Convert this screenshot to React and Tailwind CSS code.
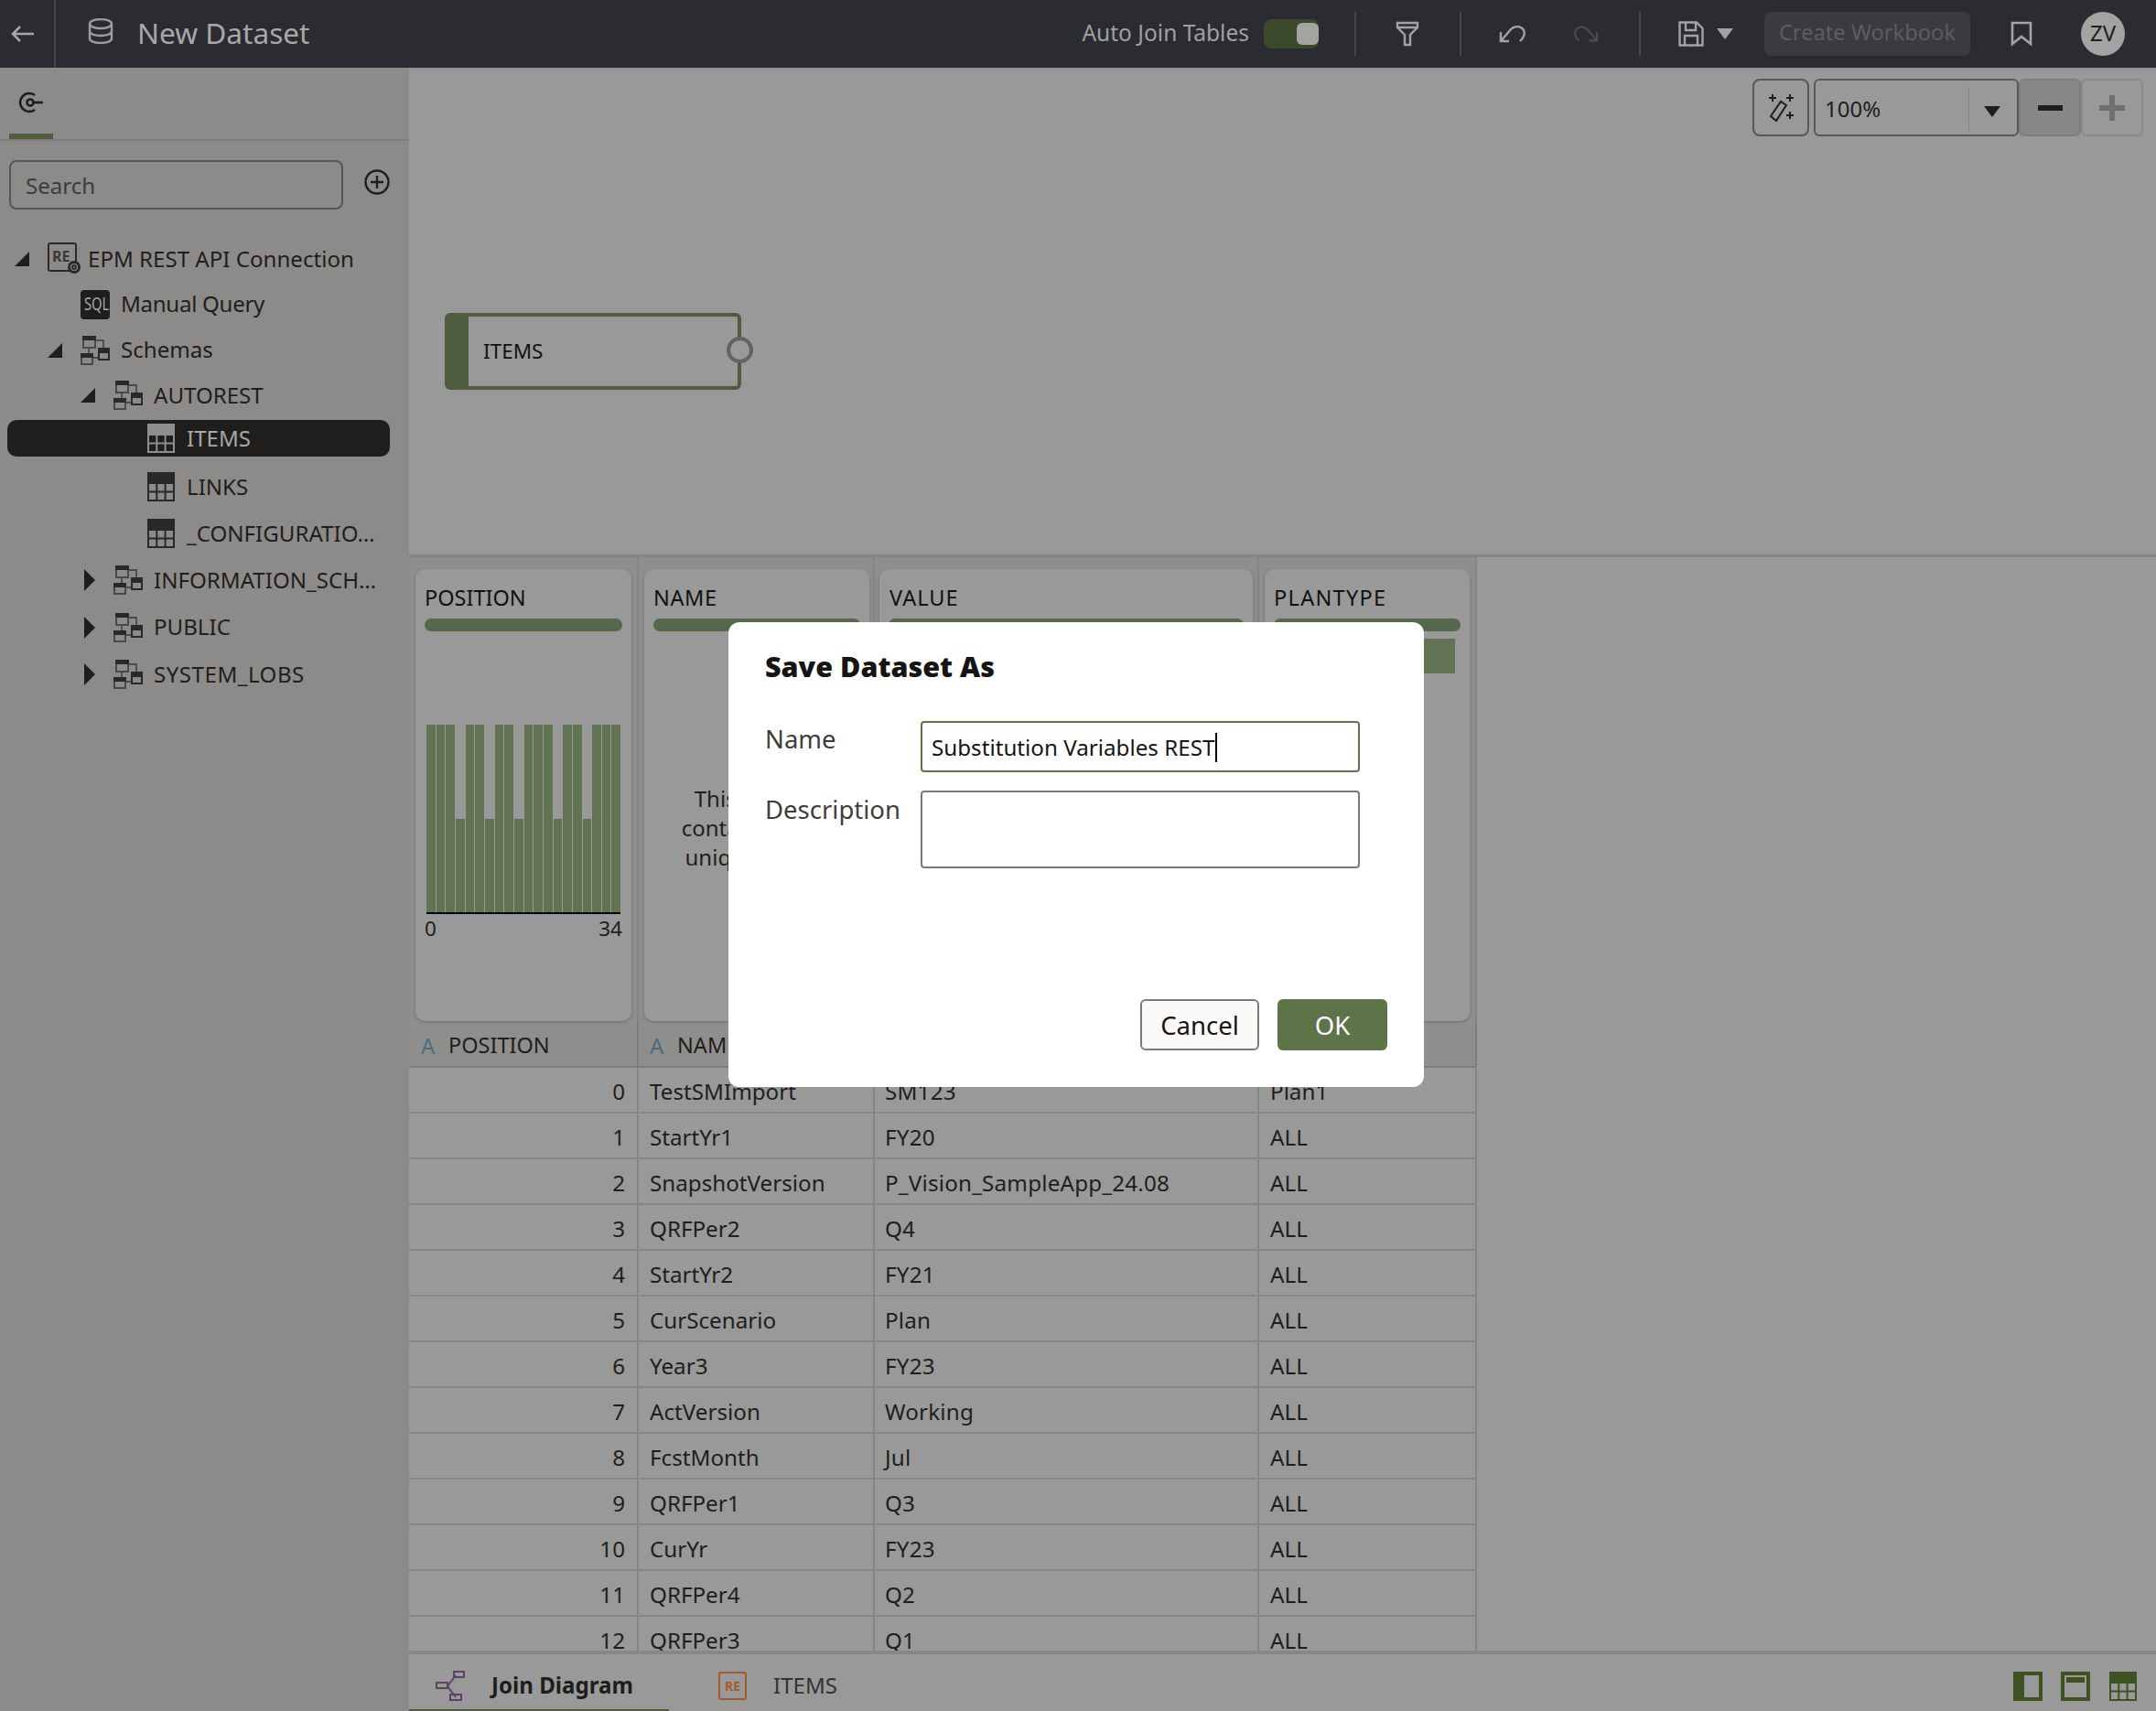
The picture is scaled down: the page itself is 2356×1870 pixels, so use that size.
import React from "react";

const rows = [
  ["0","TestSMImport","SM123","Plan1"],["1","StartYr1","FY20","ALL"],["2","SnapshotVersion","P_Vision_SampleApp_24.08","ALL"],
  ["3","QRFPer2","Q4","ALL"],["4","StartYr2","FY21","ALL"],["5","CurScenario","Plan","ALL"],["6","Year3","FY23","ALL"],
  ["7","ActVersion","Working","ALL"],["8","FcstMonth","Jul","ALL"],["9","QRFPer1","Q3","ALL"],["10","CurYr","FY23","ALL"],
  ["11","QRFPer4","Q2","ALL"],["12","QRFPer3","Q1","ALL"],
];
const bars = [1,1,1,0,1,1,0,1,1,0,1,1,1,0,1,1,0,1,1,1];
const indent = ["pl-[16px]","pl-[52px]","pl-[88px]","pl-[124px]"];
const cols = "grid grid-cols-[251px_258px_420px_238px] w-[1167px]";

const SchemaIcon = () => (
  <svg width="32" height="32" viewBox="0 0 32 32" fill="none" stroke="#2a2927" strokeWidth="2">
    <path d="M16 5H25V13M9 13V19M13 24H20" strokeWidth="1.4" stroke="#3a3937" />
    <rect x="3" y="1" width="13" height="12" stroke="#4a4947" /><rect x="2" y="0" width="15" height="5" fill="#2a2927" stroke="none" />
    <rect x="20" y="14" width="11" height="12" /><rect x="19" y="13" width="13" height="6" fill="#2a2927" stroke="none" />
    <rect x="1" y="20" width="12" height="11" stroke="#4a4947" /><rect x="0" y="19" width="14" height="5" fill="#2a2927" stroke="none" />
  </svg>
);
const TableIcon = ({ c = "#2a2927" }) => (
  <svg width="30" height="32" viewBox="0 0 30 32" className="ml-px" fill="none" stroke={c} strokeWidth="2">
    <rect x="1" y="1" width="28" height="30" />
    <rect x="0" y="0" width="30" height="13" fill={c} stroke="none" />
    <path d="M1 21.5H29M10.3 12V31M19.6 12V31" />
  </svg>
);
const ReConnIcon = () => (
  <svg width="37" height="36" viewBox="0 0 37 36" className="overflow-visible" fill="none">
    <rect x="1" y="1" width="30" height="30" rx="2" stroke="#2a2927" strokeWidth="2" />
    <text x="5" y="21" fontSize="16" fontWeight="700" fill="#3a3937" fontFamily="'Noto Sans',sans-serif">RE</text>
    <circle cx="29" cy="27" r="7" fill="#2a2927" />
    <circle cx="29" cy="27" r="3.5" stroke="#8c8b89" strokeWidth="1.2" />
    <circle cx="29" cy="27" r="1" fill="#8c8b89" />
  </svg>
);
const SqlIcon = () => (
  <div className="w-[32px] h-[32px] rounded-[4px] bg-[#1f1e1c] text-[#a8a8a6] text-[19px] leading-[31px] text-center overflow-hidden">
    <span className="inline-block scale-x-[0.78]">SQL</span>
  </div>
);
const Caret = ({ dir }) => (
  <div className="w-[16px] shrink-0 flex items-center justify-end">
    {dir === "down" && <svg width="16" height="16" viewBox="0 0 16 16"><polygon points="16,0 16,16 0,16" fill="#1f1e1c" /></svg>}
    {dir === "right" && <svg width="12" height="24" viewBox="0 0 12 24"><polygon points="0,0 12,12 0,24" fill="#1f1e1c" /></svg>}
  </div>
);

const TreeRow = ({ depth, caret, icon, label, h = "h-[51.3px]", selected, className = "", labelClass = "" }) => (
  <div className={`flex items-center ${h} ${className} ${selected ? "bg-[#1f1e1c] text-[#a8a8a6] rounded-[10px] ml-[8px] mr-[21px] pl-[116px]" : `text-[#1f1e1c] ${indent[depth]}`}`}>
    <Caret dir={caret} />
    <div className="ml-[20px] w-[32px] shrink-0 flex items-center">{icon}</div>
    <span className={`ml-[12px] whitespace-nowrap ${labelClass}`}>{label}</span>
  </div>
);

const Card = ({ title, track = "", children }) => (
  <div className="h-[494px] rounded-[10px] bg-[#999999] shadow-[0_1px_3px_rgba(0,0,0,0.25)] px-[10px] overflow-hidden">
    <div className={`mt-[19px] h-[24px] leading-[24px] text-[#111] text-[23.5px] ${track}`}>{title}</div>
    <div className="mt-[11px] h-[14px] rounded-full bg-[#55684a]" />
    {children}
  </div>
);

const Sep = ({ className }) => <div className={`w-[2px] h-[48px] bg-[#45464a] ${className}`} />;

const HeadCell = ({ label, className }) => (
  <div className={`h-[51px] pt-[5px] border-r-[2px] border-b-[2px] border-[#7d7d7c] flex items-center text-[#1f1e1c] ${className}`}>
    <span className="text-[#4b6b80] w-[30px] text-[24px]">A</span>
    <span className="text-[23.5px]">{label}</span>
  </div>
);

export default function App() {
  return (
    <div className="relative w-[2356px] h-[1870px] overflow-hidden flex flex-col bg-[#999999] text-[24.1px] font-['Noto_Sans',sans-serif]">
      {/* Header */}
      <header className="h-[74px] shrink-0 bg-[#2a2c31] flex items-center text-[#a0a0a0]">
        <div className="w-[61px] h-full border-r-[2px] border-[#45464a] flex items-center pl-[12px]">
          <svg width="26" height="20" viewBox="0 0 26 20" fill="none" stroke="#a8a8a8" strokeWidth="2.5"><path d="M25 10H2M10 2L2 10L10 18" /></svg>
        </div>
        <svg width="28" height="28" viewBox="0 0 28 28" className="ml-[35px] mb-[6px]" fill="none" stroke="#9c9c9c" strokeWidth="2.4">
          <ellipse cx="14" cy="6" rx="12" ry="5" /><path d="M2 6V22C2 25 7 27 14 27S26 25 26 22V6M2 14C2 17 7 19 14 19S26 17 26 14" />
        </svg>
        <span className="ml-[26px] pb-[2px] text-[31.6px] text-[#a8a8a8]">New Dataset</span>
        <div className="ml-auto flex items-center h-full">
          <span className="text-[24.5px] pb-[2px]">Auto Join Tables</span>
          <div className="ml-[16px] w-[60px] h-[32px] rounded-[8px] bg-[#3b4a2a] flex items-center justify-end">
            <div className="w-[24px] h-[24px] rounded-[6px] bg-[#a3a3a0]" />
          </div>
          <Sep className="ml-[39px]" />
          <svg width="26" height="28" viewBox="0 0 26 28" className="ml-[43px]" fill="none" stroke="#a3a3a3" strokeWidth="2.4"><path d="M2 2H24V7L16 15V26H10V15L2 7ZM2 7H24" /></svg>
          <Sep className="ml-[44px]" />
          <svg width="30" height="20" viewBox="0 0 30 20" className="ml-[41px]" fill="none" stroke="#a3a3a3" strokeWidth="2.4"><path d="M2 8V18H11M2 18L13 5C17 1 24 1 27 6C29 10 27 14 23 18" /></svg>
          <svg width="28" height="20" viewBox="0 0 30 20" className="ml-[51px]" fill="none" stroke="#4a4b4f" strokeWidth="2.4"><path d="M28 8V18H19M28 18L17 5C13 1 6 1 3 6C1 10 3 14 7 18" /></svg>
          <Sep className="ml-[44px]" />
          <svg width="28" height="28" viewBox="0 0 28 28" className="ml-[41px]" fill="none" stroke="#a3a3a3" strokeWidth="2.4"><path d="M1.5 1.5H20L26.5 8V26.5H1.5ZM8 2V10H19V2M7 26V16H21V26" /></svg>
          <svg width="18" height="12" viewBox="0 0 18 12" className="ml-[14px]"><polygon points="0,0 18,0 9,12" fill="#a3a3a3" /></svg>
          <div className="ml-[34px] w-[225px] h-[48px] pb-[2px] rounded-[8px] bg-[#3a3b3f] text-[#5c5d60] flex items-center justify-center text-[23.7px]">Create Workbook</div>
          <svg width="24" height="28" viewBox="0 0 24 28" className="ml-[44px]" fill="none" stroke="#a3a3a3" strokeWidth="2.6"><path d="M2 2H22V25L12 17L2 25Z" /></svg>
          <div className="ml-[53px] mr-[34px] w-[48px] h-[48px] pb-[2px] rounded-full bg-[#a3a3a3] text-[#1f1e1c] flex items-center justify-center text-[24px]">ZV</div>
        </div>
      </header>

      <div className="flex-1 flex min-h-0">
        {/* Sidebar */}
        <aside className="w-[447px] shrink-0 bg-[#8c8b89] flex flex-col">
          <div className="h-[80px] shrink-0 border-b-[2px] border-[#7f7e7c] flex flex-col">
            <svg width="28" height="24" viewBox="0 0 28 24" className="ml-[20px] mt-[26px]" fill="none" stroke="#1f1e1c" strokeWidth="2.6">
              <path d="M18 4A10 10 0 1 0 18 20" /><circle cx="13" cy="12" r="3.5" /><path d="M15 12H27" />
            </svg>
            <div className="mt-auto ml-[10px] w-[48px] h-[6px] bg-[#4f5d3e]" />
          </div>
          <div className="mt-[21px] flex items-center pl-[10px]">
            <div className="w-[365px] h-[54px] border-[2px] border-[#565653] rounded-[8px] pl-[16px] pt-[2px] flex items-center text-[#3c3c3a]">Search</div>
            <svg width="28" height="28" viewBox="0 0 28 28" className="ml-[23px] mb-[6px]" fill="none" stroke="#1f1e1c" strokeWidth="2.4"><circle cx="14" cy="14" r="12.5" /><path d="M14 7V21M7 14H21" /></svg>
          </div>
          <div className="mt-[29px]">
            <TreeRow depth={0} caret="down" h="h-[50px]" icon={<ReConnIcon />} label="EPM REST API Connection" />
            <TreeRow depth={1} h="h-[49px]" icon={<SqlIcon />} label="Manual Query" labelClass="tracking-[-0.3px]" />
            <TreeRow depth={1} caret="down" h="h-[51px]" icon={<SchemaIcon />} label="Schemas" />
            <TreeRow depth={2} caret="down" h="h-[48px]" icon={<SchemaIcon />} label="AUTOREST" />
            <TreeRow selected caret="" h="h-[40px]" className="mt-[3px] mb-[7px]" icon={<TableIcon c="#8f8f8d" />} label="ITEMS" />
            <TreeRow depth={3} icon={<TableIcon />} label="LINKS" />
            <TreeRow depth={3} icon={<TableIcon />} label="_CONFIGURATIO…" />
            <TreeRow depth={2} caret="right" icon={<SchemaIcon />} label="INFORMATION_SCH…" />
            <TreeRow depth={2} caret="right" icon={<SchemaIcon />} label="PUBLIC" />
            <TreeRow depth={2} caret="right" icon={<SchemaIcon />} label="SYSTEM_LOBS" labelClass="tracking-[0.5px]" />
          </div>
        </aside>

        {/* Main */}
        <main className="flex-1 min-w-0 flex flex-col">
          {/* Canvas */}
          <section className="relative h-[535px] shrink-0 border-t-[2px] border-b-[3px] border-t-[#949494] border-b-[#858585] flex justify-end items-start pt-[10px] pr-[14px]">
            <div className="w-[62px] h-[63px] rounded-[8px] border-[2px] border-[#5a5855] flex items-center justify-center">
              <svg width="30" height="32" viewBox="0 0 30 32" fill="none" stroke="#1f1e1c" strokeWidth="2">
                <polygon points="4,25 15,9 21,13 10,30" />
                <path d="M6 1V9M2 5H10M25 1V9M21 5H29M25 20V28M21 24H29" strokeWidth="2" />
              </svg>
            </div>
            <div className="ml-[5px] w-[224px] h-[63px] rounded-[6px] border-[2px] border-[#5a5855] flex items-center pl-[10px] pt-[2px] text-[#1f1e1c] text-[24px]">
              <span className="w-[157px]">100%</span>
              <div className="w-px h-[48px] bg-[#858585]" />
              <svg width="18" height="12" viewBox="0 0 18 12" className="ml-[16px] mt-[7px]"><polygon points="0,0 18,0 9,12" fill="#1f1e1c" /></svg>
            </div>
            <div className="w-[68px] h-[63px] rounded-[6px] border-[2px] border-[#7d7d7c] bg-[#888887] flex items-center justify-center">
              <div className="w-[27px] h-[6px] bg-[#1f1e1c]" />
            </div>
            <div className="w-[68px] h-[63px] rounded-[6px] border-[2px] border-[#8a8a8a] flex items-center justify-center">
              <svg width="28" height="28" viewBox="0 0 28 28" stroke="#6f6f6f" strokeWidth="6"><path d="M14 0V28M0 14H28" /></svg>
            </div>
            <div className="absolute left-[39px] top-[266px] w-[324px] h-[84px] rounded-[6px] border-[4px] border-[#4f5d3e] flex items-center">
              <div className="w-[22px] h-full bg-[#4f5d3e]" />
              <span className="ml-[16px] text-[22.5px] text-[#111]">ITEMS</span>
              <div className="absolute right-[-17px] top-[22px] w-[29px] h-[29px] rounded-full border-[4px] border-[#636363] bg-[#999999]" />
            </div>
          </section>

          {/* Profile */}
          <div className="shrink-0 flex">
            <div className={`${cols} bg-[#8f8e8c]`}>
              <div className="border-r-[2px] border-[#858583] pl-[7px] pr-[6px] pt-[13px]">
                <Card title="POSITION">
                  <div className="mt-[102px] px-[2px] h-[205px] flex items-end gap-px">
                    {bars.map((b, i) => <div key={i} className={`flex-1 bg-[#627354] ${b ? "h-full" : "h-[102px]"}`} />)}
                  </div>
                  <div className="mx-[2px] h-[2px] bg-black" />
                  <div className="flex justify-between text-[22.5px] leading-[28px] text-[#1f1e1c] mt-[2px]"><span>0</span><span>34</span></div>
                </Card>
              </div>
              <div className="border-r-[2px] border-[#858583] pl-[6px] pr-[4px] pt-[13px]">
                <Card title="NAME" track="tracking-[0.6px]">
                  <div className="mt-[167px] text-center text-[24px] leading-[32px] text-[#1f1e1c]">This column<br />contains many<br />unique values</div>
                </Card>
              </div>
              <div className="border-r-[2px] border-[#858583] pl-[5px] pr-[5px] pt-[13px]">
                <Card title="VALUE" track="tracking-[1px] pl-px" />
              </div>
              <div className="border-r-[2px] border-[#858583] pl-[6px] pr-[6px] pt-[13px]">
                <Card title="PLANTYPE" track="tracking-[1.3px]">
                  <div className="mt-[8px] mr-[6px] h-[38px] bg-[#627354]" />
                </Card>
              </div>
              <HeadCell label="POSITION" className="pl-[13px]" />
              <HeadCell label="NAME" className="pl-[12px]" />
              <HeadCell label="VALUE" className="pl-[11px]" />
              <HeadCell label="PLANTYPE" className="pl-[12px]" />
            </div>
          </div>

          {/* Rows */}
          <div className="flex-1 min-h-0 overflow-hidden">
            {rows.map((r) => (
              <div key={r[0]} className={`${cols} grid-rows-[50px] h-[50px] text-[#1f1e1c] text-[24.2px]`}>
                <div className="border-r-[2px] border-b-[2px] border-[#858585] pr-[13px] text-right leading-[52px]">{r[0]}</div>
                <div className="border-r-[2px] border-b-[2px] border-[#858585] pl-[12px] leading-[52px]">{r[1]}</div>
                <div className="border-r-[2px] border-b-[2px] border-[#858585] pl-[11px] leading-[52px] tracking-[0.2px]">{r[2]}</div>
                <div className="border-r-[2px] border-b-[2px] border-[#858585] pl-[12px] leading-[52px]">{r[3]}</div>
              </div>
            ))}
          </div>

          {/* Bottom tabs */}
          <div className="h-[66px] shrink-0 border-t-[4px] border-[#878787] flex items-stretch">
            <div className="w-[284px] border-b-[2px] border-[#4f5d3e] flex items-center pl-[29px] pt-[9px]">
              <svg width="32" height="34" viewBox="0 0 32 34" fill="none" stroke="#5e3f68" strokeWidth="2">
                <path d="M13 17L22 5M13 17L22 29" />
                <rect x="20" y="1" width="11" height="6" /><rect x="1" y="13" width="12" height="6" /><rect x="16" y="26" width="12" height="6" />
              </svg>
              <span className="ml-[29px] font-bold text-[#1f1e1c]">Join Diagram</span>
            </div>
            <div className="flex-1 flex items-center pt-[7px] pl-[54px] pr-[21px]">
              <div className="w-[31px] h-[31px] rounded-[3px] border-[2px] border-[#a5592a] text-[#a5592a] text-[14px] font-bold flex items-center justify-center">RE</div>
              <span className="ml-[29px] text-[#33322f]">ITEMS</span>
              <div className="ml-auto flex items-center">
                <div className="w-[32px] h-[32px] border-[4px] border-l-[12px] border-[#3f5222]" />
                <div className="ml-[20px] w-[32px] h-[32px] border-[4px] border-[#3f5222] p-[2px]"><div className="h-[6px] bg-[#3f5222]" /></div>
                <svg width="30" height="32" viewBox="0 0 30 32" className="ml-[21px]" fill="none" stroke="#3f5222" strokeWidth="2">
                  <rect x="1" y="1" width="28" height="30" /><rect x="0" y="0" width="30" height="13" fill="#3f5222" stroke="none" />
                  <path d="M1 21.5H29M10.3 12V31M19.6 12V31" />
                </svg>
              </div>
            </div>
          </div>
        </main>
      </div>

      {/* Dialog */}
      <div className="absolute left-[796px] top-[680px] w-[760px] h-[508px] rounded-[12px] bg-white flex flex-col">
        <div className="ml-[40px] mt-[30px] h-[36px] leading-[36px] text-[30.5px] font-black text-[#161513]">Save Dataset As</div>
        <div className="mt-[42px] ml-[40px] flex">
          <div className="w-[170px] text-[27.5px] leading-[36px] text-[#3f3d3a] pt-[2px] h-[55px]">Name</div>
          <div className="w-[480px] h-[56px] rounded-[4px] border-[2px] border-[#5f7449] flex items-center pl-[10px] pt-[2px] text-[#161513] text-[24.2px]">
            Substitution Variables REST
            <div className="ml-[1px] w-[2px] h-[32px] bg-black" />
          </div>
        </div>
        <div className="mt-[20px] ml-[40px] flex">
          <div className="w-[170px] text-[27.5px] leading-[36px] text-[#3f3d3a] pt-[3px]">Description</div>
          <div className="w-[480px] h-[85px] rounded-[4px] border-[2px] border-[#7d7a74]" />
        </div>
        <div className="mt-[143px] mr-[40px] flex justify-end">
          <div className="w-[130px] h-[56px] pt-[2px] rounded-[6px] border-[2px] border-[#7d7a74] bg-[#fbfaf8] text-[#161513] text-[27.5px] flex items-center justify-center">Cancel</div>
          <div className="ml-[20px] w-[120px] h-[56px] pt-[2px] rounded-[6px] bg-[#5c7448] text-white text-[27.5px] flex items-center justify-center">OK</div>
        </div>
      </div>
    </div>
  );
}
